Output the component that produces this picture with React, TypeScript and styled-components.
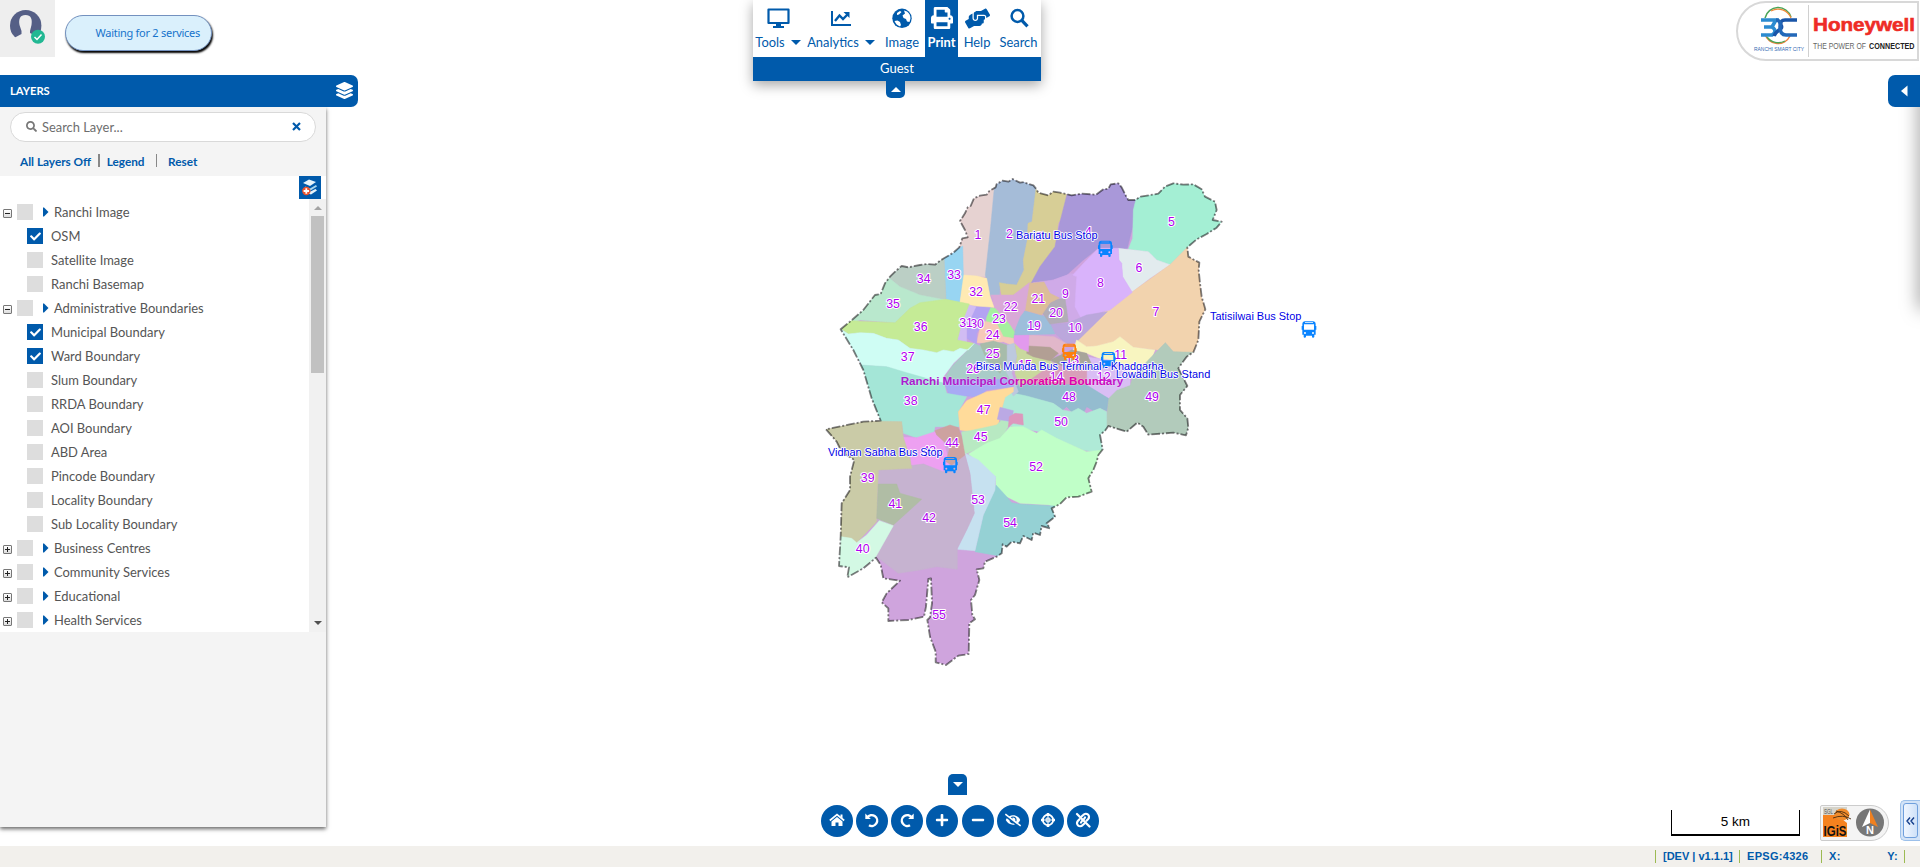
import React from 'react';
import styled, { createGlobalStyle } from 'styled-components';
import { FaPlus, FaMinus, FaEyeSlash, FaPrint, FaHandsHelping, FaLayerGroup, FaSearch, FaCheck } from 'react-icons/fa';

const BLUE = '#005aab';
const SANS = "'Lato', 'Liberation Sans', sans-serif";

const Global = createGlobalStyle`
  * { box-sizing: border-box; }
  body { margin: 0; background: #fff; overflow: hidden; font-family: ${SANS}; }
  svg { display: block; flex: none; }
`;

const Page = styled.div`
  display: flex;
  flex-direction: column;
  width: 1920px;
  height: 867px;
`;
const Stage = styled.main`
  position: relative;
  flex: 1;
  display: flex;
`;
const MapLayer = styled.svg`
  position: absolute;
  inset: 0;
`;

/* left column */
const Left = styled.aside`
  position: relative;
  width: 358px;
  display: flex;
  flex-direction: column;
`;
const UserRow = styled.div`
  display: flex;
  height: 75px;
`;
const Avatar = styled.div`
  width: 55px;
  height: 57px;
  background: #eee;
`;
const Waiting = styled.div`
  margin: 15px 0 0 10px;
  width: 147px;
  height: 36px;
  padding-right: 11px;
  border: 1px solid #7391bf;
  border-radius: 18px;
  background: #daf0fc;
  box-shadow: 1px 2px 2px #000;
  color: #1673cb;
  font: 11px/34px 'Noto Sans', sans-serif;
  letter-spacing: -0.27px;
  text-align: right;
  white-space: nowrap;
`;
const LayersHead = styled.div`
  position: relative;
  display: flex;
  justify-content: space-between;
  align-items: center;
  height: 32px;
  padding: 0 5px 1px 10px;
  background: ${BLUE};
  color: #fff;
  border-radius: 0 7px 7px 0;
  font-size: 11.2px;
  font-weight: 700;
`;
const Panel = styled.section`
  width: 326px;
  height: 720px;
  padding-top: 5px;
  background: #f4f4f4;
  box-shadow: 0 2px 4px rgba(0, 0, 0, 0.6);
`;
const SearchBox = styled.div`
  display: flex;
  align-items: center;
  height: 30px;
  margin: 0 10px;
  padding: 0 14px 1px 15px;
  border: 1px solid #d9d9d9;
  border-radius: 15px;
  background: #fff;
  color: #6d6d6d;
  font-size: 12.9px;
  gap: 5px;
`;
const Grow = styled.span`
  flex: 1;
`;
const Links = styled.div`
  display: flex;
  align-items: center;
  height: 34px;
  padding: 5px 0 0 20px;
  color: ${BLUE};
  font-size: 11.8px;
  font-weight: 700;
`;
const Bar = styled.i<{ $l: number; $r: number }>`
  width: 1.5px;
  height: 13px;
  margin: -3px ${(p) => p.$r}px 0 ${(p) => p.$l}px;
  background: #888;
`;
const AddRow = styled.div`
  display: flex;
  justify-content: flex-end;
  height: 23px;
  padding-right: 5px;
  background: #fff;
`;
const AddButton = styled.div`
  width: 22px;
  height: 23px;
  background: ${BLUE};
`;
const TreeBox = styled.div`
  display: flex;
  height: 433px;
  background: #fff;
`;
const Tree = styled.div`
  flex: 1;
  padding-top: 1px;
`;
const Row = styled.div<{ $child?: boolean }>`
  display: flex;
  align-items: center;
  height: 24px;
  padding-left: ${(p) => (p.$child ? 27 : 3)}px;
  color: #555;
  font-size: 12.95px;
  line-height: 18px;
  white-space: nowrap;
`;
const Expander = styled.span`
  width: 9px;
  height: 9px;
  margin: 3px 5px 0 0;
  border: 1px solid #777;
  border-radius: 1px;
  background: linear-gradient(#fff, #ddd);
`;
const Check = styled.span<{ $on?: boolean }>`
  display: flex;
  align-items: center;
  justify-content: center;
  width: 16px;
  height: 16px;
  background: ${(p) => (p.$on ? BLUE : '#ddd')};
  color: #fff;
`;
const Name = styled.span<{ $l: number }>`
  margin-left: ${(p) => p.$l}px;
`;
const Scroll = styled.div`
  display: flex;
  flex-direction: column;
  align-items: center;
  width: 17px;
  padding: 7px 0;
  background: #f1f1f1;
`;
const Thumb = styled.div`
  width: 13px;
  height: 157px;
  background: #c1c1c1;
  margin-top: 6px;
`;
const Tri = styled.i<{ $dir: 'up' | 'down'; $w: number; $c: string }>`
  border-left: ${(p) => p.$w}px solid transparent;
  border-right: ${(p) => p.$w}px solid transparent;
  ${(p) => (p.$dir === 'up' ? 'border-bottom' : 'border-top')}: ${(p) => p.$w}px solid ${(p) => p.$c};
`;

/* centre column */
const Center = styled.div`
  position: relative;
  width: 288px;
  margin-left: 395px;
  display: flex;
  flex-direction: column;
  align-items: center;
`;
const Toolbar = styled.nav`
  width: 288px;
  background: #fff;
  box-shadow: 0 4px 12px rgba(0, 0, 0, 0.35);
`;
const Tools = styled.div`
  display: flex;
  height: 57px;
`;
const Tool = styled.div<{ $w: number; $on?: boolean }>`
  width: ${(p) => p.$w}px;
  display: flex;
  flex-direction: column;
  align-items: center;
  padding-top: 7px;
  background: ${(p) => (p.$on ? BLUE : '#fff')};
  color: ${(p) => (p.$on ? '#fff' : BLUE)};
  font-size: 12.9px;
  font-weight: ${(p) => (p.$on ? 700 : 400)};
`;
const IconSlot = styled.span`
  display: flex;
  align-items: center;
  justify-content: center;
  width: 26px;
  height: 22px;
`;
const ToolName = styled.span`
  display: flex;
  align-items: center;
  gap: 6px;
  height: 18px;
  margin-top: 4px;
  white-space: nowrap;
`;
const Guest = styled.div`
  height: 24px;
  background: ${BLUE};
  color: #fff;
  font-size: 13px;
  line-height: 23px;
  text-align: center;
`;
const Tab = styled.div<{ $up?: boolean }>`
  width: 19px;
  height: ${(p) => (p.$up ? 17 : 21)}px;
  display: flex;
  align-items: center;
  justify-content: center;
  margin: ${(p) => (p.$up ? '0 3px 0 0' : 'auto 0 10px 121px')};
  background: ${BLUE};
  border-radius: ${(p) => (p.$up ? '0 0 5px 5px' : '5px 5px 0 0')};
`;
const Controls = styled.div`
  display: flex;
  gap: 3.15px;
  margin: 0 0 9px 126px;
`;
const Round = styled.div`
  width: 32px;
  height: 32px;
  display: flex;
  align-items: center;
  justify-content: center;
  padding-bottom: 2px;
  border-radius: 50%;
  background: ${BLUE};
  color: #fff;
`;

/* right column */
const Right = styled.div`
  position: relative;
  width: 260px;
  margin-left: auto;
  display: flex;
  flex-direction: column;
  align-items: flex-end;
`;
const Brand = styled.div`
  width: 183px;
  height: 60px;
  margin: 1px 1px 14px 0;
  border: 2px solid #d8d8d8;
  border-radius: 30px 0 0 30px;
  background: #fff;
`;
const SideTab = styled.div`
  z-index: 1;
  width: 32px;
  height: 32px;
  display: flex;
  align-items: center;
  justify-content: center;
  border-radius: 7px 0 0 7px;
  background: ${BLUE};
`;
const SideShadow = styled.div`
  width: 10px;
  height: 222px;
  margin: -20px -10px 0 0;
  box-shadow: 0 0 18px rgba(0, 0, 0, 0.5);
`;
const BottomRight = styled.div`
  display: flex;
  align-items: flex-end;
  margin-top: auto;
  padding-bottom: 5px;
`;
const Scale = styled.div`
  width: 129px;
  height: 26px;
  margin: 0 20px 5px 0;
  border: solid #000;
  border-width: 0 1.5px 2px;
  font: 13.5px/24px 'Liberation Sans', sans-serif;
  text-align: center;
`;
const Badge = styled.div`
  width: 69px;
  height: 36px;
  margin-right: 11px;
  border: 1.5px solid #ccc;
  border-radius: 2px 18px 18px 2px;
  background: #f4f4f4;
`;
const Handle = styled.div`
  display: flex;
  align-items: center;
  justify-content: center;
  width: 20px;
  height: 41px;
  padding: 2px;
  border: 1px solid #9cc0ea;
  border-right: 0;
  border-radius: 5px 0 0 5px;
  background: #d3e3f7;
`;
const HandleInner = styled.div`
  display: flex;
  align-items: center;
  justify-content: center;
  width: 15px;
  height: 35px;
  border: 1px solid #6f9fdc;
  border-radius: 3px;
  background: linear-gradient(90deg, #f0f6ff, #cfe1f8);
`;
const Footer = styled.footer`
  display: flex;
  justify-content: flex-end;
  align-items: center;
  height: 21px;
  padding: 0 15px 1px 0;
  background: #f2f0ec;
  color: ${BLUE};
  font: bold 11px 'Liberation Sans', sans-serif;
`;
const Cell = styled.div<{ $w: number; $s?: number }>`
  display: flex;
  justify-content: space-between;
  align-items: center;
  width: ${(p) => p.$w}px;
  height: 13px;
  padding: 0 6px 0 7px;
  border-left: 1px solid #9cba52;
  letter-spacing: ${(p) => p.$s ?? 0.3}px;
  white-space: nowrap;
  &:last-child { border-right: 1px solid #9cba52; }
`;

/* Ward polygons are on a 3x grid whose origin is at (820,160) */
const OUTLINE =
  '62,508 90,485 130,450 165,405 182,402 195,370 210,350 228,332 245,318 265,322 300,315 320,312 345,314 360,302 372,295 400,278 418,262 427,235 443,232 435,210 420,183 435,160 443,142 452,138 462,115 480,107 500,104 508,93 527,82 530,72 548,62 565,65 578,57 600,68 612,66 625,72 640,76 648,86 655,98 685,106 700,95 720,98 755,106 785,101 828,104 850,88 865,86 872,73 895,70 905,82 918,108 925,120 945,120 962,110 1015,101 1035,80 1060,70 1090,74 1120,73 1145,88 1155,110 1185,125 1190,150 1178,180 1205,185 1190,203 1160,222 1130,238 1102,262 1105,290 1138,308 1136,330 1140,370 1145,410 1156,448 1138,485 1135,540 1120,577 1100,590 1075,625 1088,650 1102,678 1080,705 1080,750 1102,775 1105,803 1098,826 1060,818 985,824 970,800 952,788 920,815 865,798 855,812 840,825 848,868 835,885 830,905 820,930 805,955 815,995 775,1010 740,1012 720,1032 695,1045 705,1070 680,1090 690,1105 665,1098 660,1125 640,1118 635,1140 610,1128 600,1150 575,1145 560,1160 548,1153 545,1180 530,1190 495,1205 490,1225 470,1228 478,1260 465,1305 453,1320 457,1365 465,1378 448,1390 446,1482 415,1487 378,1515 347,1507 347,1475 330,1430 322,1380 330,1372 336,1330 333,1255 325,1257 318,1340 312,1370 265,1380 205,1383 205,1345 185,1327 200,1300 240,1262 190,1255 182,1215 168,1193 130,1225 82,1252 87,1222 57,1218 62,1130 65,1030 90,990 90,950 103,900 65,875 50,845 18,808 130,785 182,782 155,715 130,630 100,570';

const WARDS: [string, string][] = [
  ['#e6d2d1', '440,80 530,70 512,250 498,350 430,350 427,262 400,262 400,150'],
  ['#a5bcd8', '527,40 650,60 648,110 640,150 636,185 624,190 622,240 610,300 612,330 590,375 540,380 538,408 510,408 496,345 512,200'],
  ['#d7ce96', '648,86 760,90 740,150 715,190 705,260 660,320 640,362 610,385 580,405 545,410 538,368 560,372 590,375 612,330 610,300 622,240 624,190 636,185'],
  ['#a998d9', '752,60 970,60 962,112 940,150 938,200 922,265 880,275 835,265 790,300 740,345 690,362 634,368 660,320 705,260 720,185'],
  ['#a4efd4', '962,60 1230,60 1230,200 1102,262 1050,314 1010,300 985,275 925,268 938,235 940,150'],
  ['#e2ebee', '895,265 985,275 1010,300 1050,314 990,355 935,397 908,350 905,310 897,300'],
  ['#f2d3ae', '1102,262 1170,300 1170,580 1095,580 1060,575 1036,548 1015,570 940,562 900,530 880,545 830,558 800,560 770,540 850,458 935,397 1050,314'],
  ['#cfaae8', '640,368 700,360 755,340 768,350 780,440 790,472 742,490 740,440 718,412 690,405 670,370'],
  ['#d9b3fb', '800,300 835,265 895,265 897,300 905,310 908,350 937,397 870,450 782,472 765,440 770,350 758,345'],
  ['#bba7dc', '690,492 742,490 800,465 862,455 770,545 740,552 705,520'],
  ['#f8f5c0', '770,540 800,560 830,558 880,545 900,530 940,562 1005,570 990,605 960,640 930,650 900,620 800,580 760,570'],
  ['#b2cbbb', '1036,548 1060,575 1120,577 1120,840 860,840 860,780 865,715 890,690 930,675 940,650 985,600'],
  ['#d9bef4', '790,590 870,600 930,625 930,675 890,690 865,715 790,680'],
  ['#a7a59a', '755,570 800,580 820,625 740,625 690,600'],
  ['#d89fb9', '660,620 800,620 800,680 600,680'],
  ['#94bccf', '560,690 600,670 800,675 865,715 860,752 840,745 820,752 800,740 790,760 775,745 755,755 740,740 728,750 700,730 640,715 580,705'],
  ['#afead7', '555,695 620,708 700,730 728,750 755,755 775,745 800,760 840,745 860,755 860,800 850,880 790,870 720,840 690,830 660,815 580,800 540,780 550,730'],
  ['#c9d99e', '582,530 625,560 620,580 680,595 700,610 670,630 600,680 585,640 590,590'],
  ['#e1b7ca', '625,525 702,530 742,552 720,585 700,570 625,560'],
  ['#b29f94', '625,558 690,562 715,580 690,602 640,590 620,580'],
  ['#e29aed', '582,525 627,525 625,575 600,565 580,545'],
  ['#9dbedb', '605,450 680,470 705,522 582,525 590,485'],
  ['#b2adb7', '700,420 735,415 745,485 690,492 665,455'],
  ['#dcbd9b', '628,370 672,366 690,400 718,414 690,428 665,465 612,450 615,400'],
  ['#d9a9d7', '512,405 580,405 628,368 615,450 600,470 583,512 550,480 510,440 520,420'],
  ['#a5f09f', '497,440 525,445 548,470 570,495 583,515 580,535 548,530 500,490'],
  ['#f6c9b9', '485,483 530,490 550,530 580,535 583,558 550,545 510,550 470,548'],
  ['#bdc9de', '545,560 582,550 590,590 575,640 595,695 580,708 540,640'],
  ['#a9ccc8', '462,550 485,560 500,585 550,620 570,660 370,660 395,620'],
  ['#a7bcaa', '480,552 520,543 560,555 560,600 540,640 500,600'],
  ['#a8aaf4', '370,658 580,658 580,680 500,690 475,712 440,708 415,712 385,700'],
  ['#b3a3f2', '460,440 512,440 495,480 470,520 470,552 440,535 440,490'],
  ['#d1bcf3', '440,432 468,440 440,500 440,545 410,545 425,490'],
  ['#ffeab3', '428,345 470,348 500,355 510,408 522,442 470,438 418,428'],
  ['#98d5f2', '372,290 400,275 428,258 430,345 418,428 378,420'],
  ['#bbcfc5', '205,352 230,310 265,305 372,290 378,420 300,405 240,380'],
  ['#b9e8cd', '150,400 205,352 240,380 300,405 378,420 300,430 270,445 225,488 120,480 75,495 62,508'],
  ['#c5eb96', '65,508 90,482 225,488 270,445 300,428 378,418 448,432 425,490 412,540 460,550 445,570 420,565 400,575 370,570 350,578 310,570 270,565 235,540 200,535 160,520 120,518 85,522'],
  ['#cffdf4', '62,508 85,522 120,518 160,520 200,535 235,540 270,565 310,570 350,578 370,570 400,575 420,565 445,570 463,550 400,610 370,650 370,670 260,640 200,620 125,615'],
  ['#a4e6d7', '120,615 200,620 260,638 372,670 380,700 440,710 415,755 418,800 345,800 340,825 290,833 250,820 245,785 180,785'],
  ['#ffdb9a', '415,755 440,722 500,695 580,682 580,695 555,712 540,765 535,795 450,815 420,810'],
  ['#b8e9c2', '425,815 450,812 530,795 545,780 570,790 545,835 430,885'],
  ['#c0ffc8', '445,882 500,850 540,835 570,800 610,800 650,820 665,810 710,835 800,875 850,870 830,960 830,1000 700,1060 690,1035 600,1030 560,1010 528,978 527,950'],
  ['#bba9e4', '540,742 580,752 575,785 532,778'],
  ['#dd97bd', '568,770 585,760 608,762 610,795 580,790 565,800'],
  ['#95d1d4', '528,975 560,1010 575,1028 605,1033 705,1038 715,1120 550,1190 465,1175 490,1065'],
  ['#c6e1f0', '435,880 475,900 527,950 525,990 490,1065 465,1172 412,1168 440,1110 463,1060 450,940'],
  ['#eda0f1', '250,832 290,833 345,815 370,845 390,910 370,940 310,912 275,922 270,895'],
  ['#c6b3d0', '175,930 230,922 310,912 370,935 395,915 435,885 450,940 463,1060 440,1110 412,1165 412,1228 350,1220 300,1230 235,1240 170,1190 175,970'],
  ['#cda2a0', '345,812 390,795 415,803 425,830 435,885 395,915 378,905 390,860 350,825'],
  ['#cacba7', '0,780 245,785 250,832 270,895 275,925 175,930 170,1085 110,1148 50,1128'],
  ['#b0bda5', '175,972 230,972 240,1000 305,1018 220,1095 170,1075'],
  ['#d3f9e4', '50,1128 95,1135 110,1148 140,1125 178,1082 220,1097 165,1195 70,1270 40,1220'],
];

const NUMBERS: [string, number, number][] = [
  ['1', 474, 224], ['2', 568, 220], ['3', 657, 230], ['4', 805, 214], ['5', 1054, 185], ['6', 957, 323], ['7', 1008, 455],
  ['8', 841, 368], ['9', 736, 402], ['10', 765, 502], ['11', 902, 584], ['12', 851, 651], ['13', 757, 598], ['14', 710, 650],
  ['15', 615, 614], ['19', 642, 498], ['20', 708, 458], ['21', 655, 416], ['22', 572, 440], ['23', 537, 476], ['24', 518, 524],
  ['25', 518, 580], ['26', 459, 626], ['30', 471, 490], ['31', 438, 488], ['32', 468, 396], ['33', 402, 344], ['34', 311, 356],
  ['35', 219, 431], ['36', 302, 500], ['37', 263, 590], ['38', 272, 723], ['39', 143, 953], ['40', 128, 1167], ['41', 226, 1031],
  ['42', 327, 1073], ['43', 328, 873], ['44', 396, 847], ['45', 482, 830], ['47', 491, 749], ['48', 747, 710], ['49', 996, 710],
  ['50', 723, 785], ['52', 648, 921], ['53', 474, 1018], ['54', 570, 1088], ['55', 357, 1364],
];

const STOPS: [string, number, number, number][] = [
  ['Bariatu Bus Stop', 588, 226, 245],
  ['Tatisilwai Bus Stop', 1170, 469, 274],
  ['Birsa Munda Bus Terminal - Khadgarha', 467, 619, 564],
  ['Lowadih Bus Stand', 887, 643, 284],
  ['Vidhan Sabha Bus Stop', 24, 877, 344],
];

const BUSES: [number, number, string][] = [
  [856, 266, '#0a84ff'], [1467, 508, '#0a84ff'], [748, 575, '#ff7f0a'], [865, 600, '#0a84ff'], [391, 915, '#0a84ff'],
];

const Bus = ({ x, y, c }: { x: number; y: number; c: string }) => (
  <g transform={`translate(${x - 22} ${y - 24})`}>
    <path
      fillRule="evenodd"
      fill={c}
      d="M9 0H35Q42 1 42 7V14H44V25H42V40H38V46Q38 49 34 49Q31 49 31 46V43H13V46Q13 49 9 49Q6 49 6 46V40H2V25H0V14H2V7Q2 1 9 0ZM10 3V5H34V3ZM7 9V25H37V9ZM10 32A3 3 0 1 0 10 38A3 3 0 1 0 10 32ZM34 32A3 3 0 1 0 34 38A3 3 0 1 0 34 32Z"
    />
  </g>
);

const CityMap = () => (
  <MapLayer width="1920" height="846" viewBox="0 0 1920 846">
    <defs>
      <clipPath id="city"><polygon points={OUTLINE} /></clipPath>
      <linearGradient id="title">
        <stop offset="0" stopColor="#a81bd0" />
        <stop offset="0.45" stopColor="#b818c4" />
        <stop offset="0.62" stopColor="#e300a4" />
        <stop offset="0.85" stopColor="#d800b0" />
        <stop offset="1" stopColor="#b818d0" />
      </linearGradient>
    </defs>
    <g transform="translate(820 160) scale(0.33333)">
      <g clipPath="url(#city)">
        <polygon points={OUTLINE} fill="#cfa4dd" />
        {WARDS.map(([c, p], i) => <polygon key={i} points={p} fill={c} stroke={c} strokeWidth="1.5" strokeLinejoin="round" />)}
      </g>
      <polygon points={OUTLINE} fill="none" stroke="#000" strokeOpacity="0.5" strokeWidth="5.5" strokeDasharray="26 6 6 6" strokeLinejoin="round" />
      <g fontFamily="'Liberation Sans', sans-serif" paintOrder="stroke" strokeLinejoin="round">
        <g fontSize="37" fill="#b000f0" stroke="#fff" strokeWidth="6" textAnchor="middle">
          {NUMBERS.map(([t, x, y]) => <text key={t} x={x} y={y + 13.5}>{t}</text>)}
        </g>
        <text x="242" y="674" fontSize="35" fontWeight="700" fill="url(#title)" stroke="#fff" strokeOpacity="0.25" strokeWidth="4" textLength="668">Ranchi Municipal Corporation Boundary</text>
        {BUSES.map(([x, y, c]) => <Bus key={x} x={x} y={y} c={c} />)}
        <g fontSize="33" fill="#0000e6" stroke="#fff" strokeWidth="5">
          {STOPS.map(([t, x, y, w]) => <text key={t} x={x} y={y + 11} textLength={w}>{t}</text>)}
        </g>
      </g>
    </g>
  </MapLayer>
);

const AvatarIcon = () => (
  <svg width="55" height="57" viewBox="0 0 55 57">
    <circle cx="25.7" cy="25.7" r="15.7" fill="#555f86" />
    <path d="M25.5 15C20 15 18.5 19 19.5 25L21.5 31V34L14 38L20 44H34L38 37L30 33V31L31.5 25C32.5 19 31 15 25.5 15Z" fill="#eee" />
    <circle cx="38" cy="36.7" r="7" fill="#22b893" />
    <path d="M34.5 37L37 39.5L41.5 34.5" fill="none" stroke="#fff" strokeWidth="1.5" />
  </svg>
);

const AddLayerIcon = () => (
  <svg width="22" height="23" viewBox="0 0 22 23">
    <g fill="#e6f4fb">
      <path d="M4 7L10 3.5L17 6L11 10Z" />
      <path d="M6 10.5L11 12.5L17 9L18 10.5L11.5 14.5L6 12Z" fill="#a8d6ee" />
      <path d="M9 14L11.5 15.5L16.5 13L18 14.5L12 18.5L8 17Z" />
    </g>
    <circle cx="7.3" cy="15" r="4.2" fill="#e9532e" />
    <path d="M7.3 12.3V17.7M4.6 15H10" stroke="#fff" strokeWidth="1.8" />
  </svg>
);

const MonitorIcon = () => (
  <svg width="23" height="22" viewBox="0 0 23 22">
    <path d="M1.5 2.5H21.5V16H1.5Z" fill="none" stroke="currentColor" strokeWidth="2.2" strokeLinejoin="round" />
    <path d="M9 16H14V19H17V21H6V19H9Z" fill="currentColor" />
  </svg>
);
const TrendIcon = () => (
  <svg width="22" height="22" viewBox="0 0 22 22" fill="none" stroke="currentColor">
    <path d="M2 4V18H21" strokeWidth="2" />
    <path d="M5 14L9.5 8.5L13 12L18 7" strokeWidth="2.4" />
    <path d="M13.5 5H19.5V11Z" fill="currentColor" stroke="none" />
  </svg>
);
const GlobeIcon = () => (
  <svg width="22" height="22" viewBox="0 0 22 22">
    <circle cx="11" cy="11.3" r="9.7" fill="currentColor" />
    <path d="M13 3.5L16 4.5Q19.500 7 19.500 11.500L18.500 15L16 14.500L15 12L12.500 11L11.500 8.500L14 6.500ZM3.500 14L6.500 13.500L9 15L10 18L9 19.500Q5 18 3.500 14Z" fill="#fff" />
    <path d="M6 6L9 4L10.500 5L8 7.500L6 8Z" fill="#fff" />
  </svg>
);
const SearchIcon = () => (
  <svg width="22" height="22" viewBox="0 0 22 22" fill="none" stroke="currentColor">
    <circle cx="9.500" cy="9" r="5.900" strokeWidth="2.500" />
    <path d="M13.800 13.300L19.500 19.300" strokeWidth="3.200" />
  </svg>
);

const HomeIcon = () => (
  <svg width="16" height="14" viewBox="0 0 16 14">
    <path d="M0.800 7.500L8 1.500L15.200 7.500" fill="none" stroke="currentColor" strokeWidth="1.700" />
    <path d="M11.500 1.500H13.500V5.500L11.500 4ZM8 4L13.500 8.500V13H9.500V9.500H6.500V13H2.500V8.500Z" fill="currentColor" />
  </svg>
);
const TurnIcon = ({ flip }: { flip?: boolean }) => (
  <svg width="16" height="16" viewBox="0 0 16 16" fill="none" stroke="currentColor">
    <g transform={flip ? 'translate(16 0) scale(-1 1)' : undefined}>
      <path d="M3.3 5.5A5.4 5.4 0 1 1 5 13.2" strokeWidth="2.4" />
      <path d="M1.3 1.5V7H6.8Z" fill="currentColor" stroke="none" />
    </g>
  </svg>
);
const TargetIcon = () => (
  <svg width="16" height="16" viewBox="0 0 16 16" fill="none" stroke="currentColor">
    <circle cx="8" cy="8" r="5.2" strokeWidth="1.9" />
    <path d="M8 1V4M8 12V15M1 8H4M12 8H15" strokeWidth="2.6" />
    <path d="M8 4V12M4 8H12" strokeWidth="1.1" />
    <path d="M6.2 6.2H9.8V9.8H6.2Z" strokeWidth="1" />
  </svg>
);
const UnlinkIcon = () => (
  <svg width="16" height="16" viewBox="0 0 16 16" fill="none" stroke="currentColor" strokeWidth="2.2" strokeLinecap="round">
    <path d="M6.5 4.5L8.5 2.8A2.9 2.9 0 0 1 13.2 7L11.5 8.8M10 5.5L9 7M9.5 11.5L7.5 13.2A2.9 2.9 0 0 1 2.8 9L4.5 7.2M6 10.5L7 9" />
    <path d="M2 2L14.5 14.5" />
  </svg>
);

const SmartCityLogo = () => (
  <svg width="179" height="56" viewBox="1738 3 179 56">
    <g fill="none">
      <path d="M1765 18A13.5 13.5 0 0 1 1791 17" stroke="#4aa557" strokeWidth="1.5" />
      <path d="M1771 11A14 14 0 0 1 1791 18" stroke="#f08a3c" strokeWidth="1.3" />
      <path d="M1765 34A13.5 13.5 0 0 0 1790 36" stroke="#f0803c" strokeWidth="1.6" />
      <path d="M1767 37A14 14 0 0 0 1785 41" stroke="#4aa557" strokeWidth="1.3" />
      <path d="M1761 20H1776L1772 27H1764M1772 27Q1778 31 1772 35H1761" stroke="#2b8bd0" strokeWidth="3.6" />
      <path d="M1797 20H1785Q1780 20 1781 25Q1783 28 1779 30Q1775 33 1774 36" stroke="#1a55a8" strokeWidth="3.5" />
      <path d="M1776 20Q1781 20 1780 27Q1780 35 1786 35H1797" stroke="#2368b8" strokeWidth="3.6" />
    </g>
    <path d="M1808.5 5V57" stroke="#d0d0d0" />
    <g fontFamily="'Liberation Sans', sans-serif">
      <text x="1754" y="50.5" fontSize="5.3" fill="#3468b2" textLength="50" lengthAdjust="spacingAndGlyphs">RANCHI SMART CITY</text>
      <text x="1813" y="31" fontSize="19" fontWeight="700" fill="#ee2c26" stroke="#ee2c26" strokeWidth="0.6" textLength="102" lengthAdjust="spacingAndGlyphs">Honeywell</text>
      <text x="1813" y="48.5" fontSize="9.6" fill="#666" textLength="53" lengthAdjust="spacingAndGlyphs">THE POWER OF</text>
      <text x="1869" y="48.5" fontSize="9.6" fontWeight="700" fill="#222" textLength="45.5" lengthAdjust="spacingAndGlyphs">CONNECTED</text>
    </g>
  </svg>
);

const IgisIcon = () => (
  <svg width="66" height="33" viewBox="0 0 66 33">
    <path d="M2 1H26V9H2Z" fill="#d5d3c9" />
    <path d="M2 9H17L21 13L26 17V31H2Z" fill="#f5821f" />
    <ellipse cx="21" cy="8.5" rx="7.5" ry="6" fill="#f08c2c" />
    <path d="M13 8Q20 2 28 10M15 5Q23 7 27 14M12 12Q22 8 30 13" fill="none" stroke="#4a2c10" strokeWidth="0.9" />
    <g fontFamily="'Liberation Sans', sans-serif">
      <text x="3" y="7.5" fontSize="6.5" fill="#555" textLength="9" lengthAdjust="spacingAndGlyphs">SGL</text>
      <text x="2.5" y="30" fontSize="15" fontWeight="700" fill="#111" textLength="23" lengthAdjust="spacingAndGlyphs">IGiS</text>
      <circle cx="49" cy="16.5" r="14" fill="#777" />
      <path d="M49 3.5L41 21L49 17Z" fill="#fff" />
      <path d="M49 3.5L57 21L49 17Z" fill="#f08020" />
      <text x="49" y="28" fontSize="11" fontWeight="700" fill="#fff" textAnchor="middle">N</text>
    </g>
  </svg>
);

type Item = { name: string; group?: boolean; open?: boolean; on?: boolean };
const ITEMS: Item[] = [
  { name: 'Ranchi Image', group: true, open: true },
  { name: 'OSM', on: true },
  { name: 'Satellite Image' },
  { name: 'Ranchi Basemap' },
  { name: 'Administrative Boundaries', group: true, open: true },
  { name: 'Municipal Boundary', on: true },
  { name: 'Ward Boundary', on: true },
  { name: 'Slum Boundary' },
  { name: 'RRDA Boundary' },
  { name: 'AOI Boundary' },
  { name: 'ABD Area' },
  { name: 'Pincode Boundary' },
  { name: 'Locality Boundary' },
  { name: 'Sub Locality Boundary' },
  { name: 'Business Centres', group: true },
  { name: 'Community Services', group: true },
  { name: 'Educational', group: true },
  { name: 'Health Services', group: true },
];

const TreeRow = ({ item }: { item: Item }) =>
  item.group ? (
    <Row>
      <Expander>
        <svg width="7" height="7" viewBox="0 0 7 7">
          <path d={item.open ? 'M1 3.5H6' : 'M1 3.5H6M3.5 1V6'} stroke="#222" />
        </svg>
      </Expander>
      <Check />
      <svg width="16" height="10" viewBox="0 0 16 10"><path d="M10 0.5H11L15.5 5L11 9.5H10Z" fill={BLUE} /></svg>
      <Name $l={5}>{item.name}</Name>
    </Row>
  ) : (
    <Row $child>
      <Check $on={item.on}>{item.on && <FaCheck size={11} />}</Check>
      <Name $l={8}>{item.name}</Name>
    </Row>
  );

export default function App() {
  return (
    <Page>
      <Global />
      <Stage>
        <CityMap />
        <Left>
          <UserRow>
            <Avatar><AvatarIcon /></Avatar>
            <Waiting>Waiting for 2 services</Waiting>
          </UserRow>
          <LayersHead>LAYERS<FaLayerGroup size={17} /></LayersHead>
          <Panel>
            <SearchBox>
              <FaSearch size={11} color="#777" />
              <Grow>Search Layer...</Grow>
              <svg width="9" height="9" viewBox="0 0 9 9"><path d="M1 1L8 8M8 1L1 8" stroke={BLUE} strokeWidth="2.2" /></svg>
            </SearchBox>
            <Links>
              All Layers Off<Bar $l={7} $r={7} />Legend<Bar $l={11} $r={11} />Reset
            </Links>
            <AddRow><AddButton><AddLayerIcon /></AddButton></AddRow>
            <TreeBox>
              <Tree>{ITEMS.map((it) => <TreeRow key={it.name} item={it} />)}</Tree>
              <Scroll>
                <Tri $dir="up" $w={4} $c="#a3a3a3" />
                <Thumb />
                <Grow />
                <Tri $dir="down" $w={4} $c="#505050" />
              </Scroll>
            </TreeBox>
          </Panel>
        </Left>
        <Center>
          <Toolbar>
            <Tools>
              <Tool $w={50}><MonitorIcon /><ToolName>Tools<Tri $dir="down" $w={5} $c={BLUE} /></ToolName></Tool>
              <Tool $w={76}><TrendIcon /><ToolName>Analytics<Tri $dir="down" $w={5} $c={BLUE} /></ToolName></Tool>
              <Tool $w={46}><GlobeIcon /><ToolName>Image</ToolName></Tool>
              <Tool $w={33} $on><FaPrint size={22} /><ToolName>Print</ToolName></Tool>
              <Tool $w={38}><IconSlot><FaHandsHelping size={25} /></IconSlot><ToolName>Help</ToolName></Tool>
              <Tool $w={45}><SearchIcon /><ToolName>Search</ToolName></Tool>
            </Tools>
            <Guest>Guest</Guest>
          </Toolbar>
          <Tab $up><Tri $dir="up" $w={5} $c="#fff" /></Tab>
          <Tab><Tri $dir="down" $w={5} $c="#fff" /></Tab>
          <Controls>
            <Round><HomeIcon /></Round>
            <Round><TurnIcon /></Round>
            <Round><TurnIcon flip /></Round>
            <Round><FaPlus size={14} /></Round>
            <Round><FaMinus size={14} /></Round>
            <Round><FaEyeSlash size={16} /></Round>
            <Round><TargetIcon /></Round>
            <Round><UnlinkIcon /></Round>
          </Controls>
        </Center>
        <Right>
          <Brand><SmartCityLogo /></Brand>
          <SideTab>
            <svg width="8" height="12" viewBox="0 0 8 12"><path d="M7.5 0.5V11.5L1 6Z" fill="#fff" /></svg>
          </SideTab>
          <SideShadow />
          <BottomRight>
            <Scale>5 km</Scale>
            <Badge><IgisIcon /></Badge>
            <Handle>
              <HandleInner>
                <svg width="9" height="8" viewBox="0 0 9 8"><path d="M4 0.5L1 4L4 7.5M8 0.5L5 4L8 7.5" fill="none" stroke="#153f8c" strokeWidth="1.4" /></svg>
              </HandleInner>
            </Handle>
          </BottomRight>
        </Right>
      </Stage>
      <Footer>
        <Cell $w={84} $s={0}>[DEV | v1.1.1]</Cell>
        <Cell $w={82}>EPSG:4326</Cell>
        <Cell $w={84}><span>X:</span><span>Y:</span></Cell>
      </Footer>
    </Page>
  );
}
